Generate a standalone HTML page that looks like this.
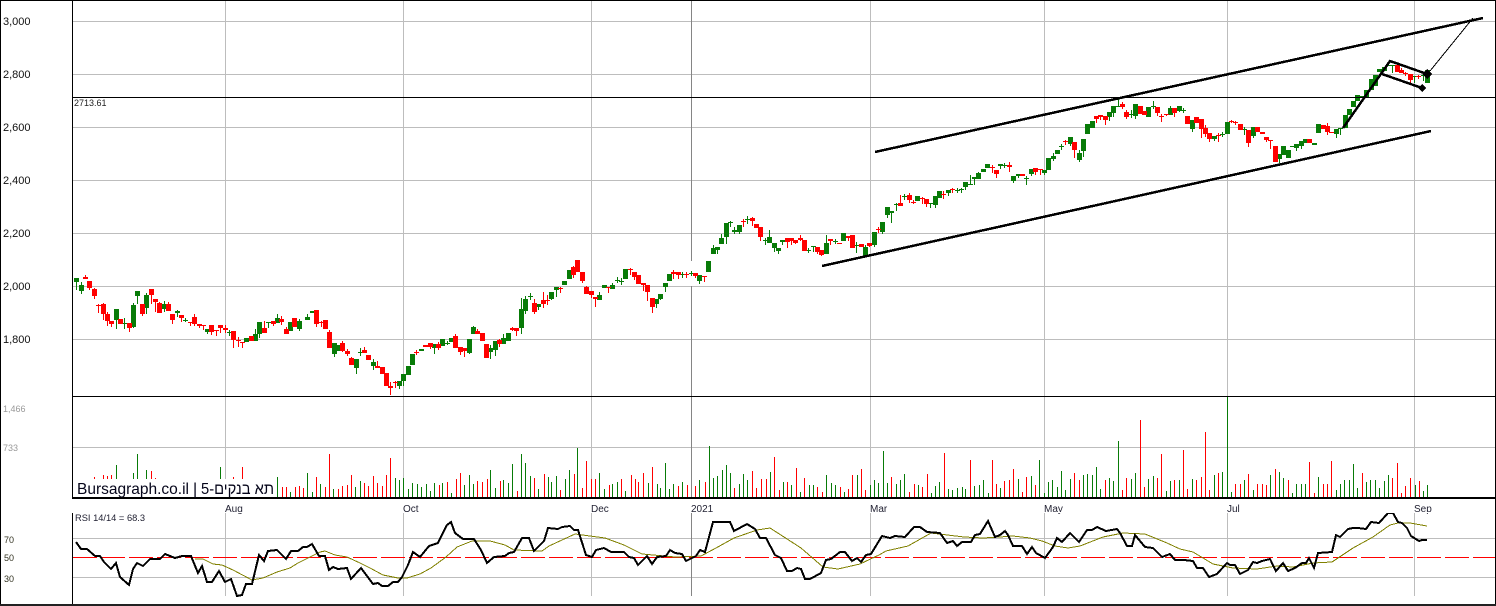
<!DOCTYPE html>
<html><head><meta charset="utf-8"><title>Bursagraph</title>
<style>html,body{margin:0;padding:0;background:#fff;overflow:hidden}svg{display:block}text{font-family:"Liberation Sans",Arial,sans-serif}</style></head>
<body>
<svg xmlns="http://www.w3.org/2000/svg" width="1496" height="606" viewBox="0 0 1496 606" shape-rendering="crispEdges">
<rect width="1496" height="606" fill="#fff"/>
<!-- grid -->
<path fill="none" stroke="#bdbdbd" d="M73 21.5H1495M73 74.5H1495M73 127.5H1495M73 180.5H1495M73 233.5H1495M73 286.5H1495M73 339.5H1495M73 447.5H1495M73 538.5H1495M73 577.5H1495"/>
<path fill="none" stroke="#bdbdbd" d="M225.5 1V497M403.5 1V497M591.5 1V497M870.5 1V497M1044.5 1V497M1227.5 1V497M1414.5 1V497M225.5 513V596M403.5 513V596M591.5 513V596M870.5 513V596M1044.5 513V596M1227.5 513V596M1414.5 513V596"/>
<path fill="none" stroke="#858585" d="M691.5 1V261M691.5 286V497M691.5 513V596"/>
<!-- candles -->
<g transform="translate(.5 0)" fill="none">
<path stroke="#087b08" d="M76 278V290M81 282V294M116 309V329M124 318V329M133 303V328M137 291V304M146 293V314M164 301V312M177 310V317M185 318V322M207 329V334M229 330V336M255 329V341M259 322V338M268 322V328M277 314V323M299 319V331M307 314V320M334 343V357M356 359V374M360 348V356M373 359V370M399 381V389M403 374V386M434 344V354M447 341V345M469 339V354M473 326V334M490 345V359M495 341V356M503 334V344M521 298V334M525 296V314M530 293V300M538 304V310M551 292V300M556 287V297M599 292V300M612 283V289M617 277V283M621 278V285M656 299V308M660 294V300M665 283V292M682 272V278M691 271V276M699 275V284M713 245V254M717 247V254M721 234V244M726 223V244M730 221V227M734 227V234M739 225V234M747 216V224M765 238V245M769 230V243M774 243V252M778 248V254M782 240V245M808 248V253M813 246V252M826 235V254M835 239V244M856 242V253M865 245V257M874 232V247M882 222V234M887 207V218M891 211V223M896 203V211M904 194V200M917 196V201M930 203V208M935 196V208M939 191V198M948 190V196M957 188V193M961 188V193M965 182V190M970 175V185M974 177V185M978 172V179M1000 164V169M1004 163V168M1013 176V183M1018 174V178M1026 176V185M1031 169V176M1044 170V175M1053 153V161M1061 144V150M1070 137V146M1079 150V162M1083 139V157M1109 112V121M1113 106V117M1118 99V106M1131 110V118M1135 104V119M1153 101V109M1170 106V115M1179 106V112M1183 108V113M1192 120V132M1214 136V141M1222 132V137M1244 127V135M1253 127V138M1279 154V163M1296 144V151M1301 141V149M1336 129V138M1340 128V135M1392 65V73M1414 76V83M1423 75V81"/>
<path stroke="#087b08" stroke-width="5" d="M76 278V282M81 285V291M116 309V320M124 323V324M133 305V327M137 291V296M146 295V308M164 304V309M177 311V313M185 320V321M207 329V332M229 332V333M246 338V342M255 334V341M259 322V334M268 322V323M277 318V323M290 322V331M299 321V329M307 317V320M312 311V313M334 343V354M338 345V351M356 359V368M360 352V353M373 362V366M399 381V386M403 374V381M408 366V375M412 354V365M421 349V351M434 344V348M442 339V346M447 343V344M451 338V342M469 339V353M473 327V334M490 348V352M495 341V350M503 338V344M508 333V341M521 309V328M525 299V311M530 296V297M538 304V307M551 292V299M556 287V290M564 281V285M569 270V279M599 295V300M604 285V288M612 285V289M617 280V281M621 281V282M625 269V279M656 299V304M660 294V299M665 283V287M669 274V281M682 274V275M691 273V274M699 275V281M708 261V272M713 248V254M717 247V250M721 238V244M726 223V237M730 222V223M734 230V232M739 225V232M747 219V220M765 240V241M769 237V243M774 243V248M778 248V251M782 240V242M808 250V251M813 246V247M826 243V254M835 241V242M843 233V241M856 245V246M865 247V256M874 232V245M882 222V232M887 207V215M891 211V213M896 204V205M904 196V197M917 196V201M930 203V204M935 196V205M939 191V198M948 190V193M957 190V191M961 189V190M965 182V187M970 184V185M974 177V179M978 173V179M983 169V172M987 164V168M1000 164V166M1004 165V166M1013 176V181M1018 174V176M1026 178V179M1031 169V174M1044 170V173M1048 158V170M1053 156V159M1057 150V154M1061 146V147M1070 137V144M1079 153V160M1083 139V151M1087 124V134M1092 121V128M1109 112V117M1113 106V113M1118 106V107M1131 114V115M1135 104V116M1148 107V117M1153 106V107M1170 108V115M1179 106V111M1183 110V111M1192 120V129M1214 136V139M1222 134V135M1227 122V134M1244 129V130M1253 127V136M1279 154V159M1283 146V155M1288 150V158M1292 146V147M1296 144V148M1301 141V146M1305 139V143M1314 143V145M1318 124V133M1336 129V134M1340 128V129M1345 115V128M1349 109V115M1353 101V107M1357 95V101M1362 96V97M1366 90V97M1371 79V90M1375 75V86M1379 69V72M1384 67V71M1388 65V66M1392 65V66M1414 76V77M1423 75V76M1427 70V83"/>
<path stroke="#f00" d="M85 275V279M89 281V290M94 288V299M98 304V313M103 303V320M107 312V326M111 321V327M129 323V332M142 304V316M151 289V304M155 299V312M159 302V313M168 302V311M172 314V324M181 315V322M190 322V326M194 314V326M199 324V328M203 325V330M211 325V335M216 330V336M220 325V333M225 325V333M233 331V348M238 337V347M242 342V348M264 321V333M273 321V326M281 316V325M286 327V334M316 310V327M321 321V327M329 330V348M342 341V352M347 349V356M351 357V365M364 347V353M377 361V368M390 382V395M395 381V388M416 350V355M430 343V349M438 342V350M455 334V348M460 347V355M464 348V357M477 329V334M499 339V347M512 327V331M516 328V336M534 299V314M543 292V308M547 295V305M560 287V293M573 266V278M582 272V283M586 286V294M591 291V298M595 297V307M608 287V293M630 268V275M634 272V280M643 283V291M647 285V301M652 298V313M673 270V279M678 272V279M686 272V278M695 273V278M704 276V282M743 219V227M752 217V226M760 227V241M787 238V248M791 238V245M795 240V244M800 235V241M817 247V254M821 250V256M830 239V245M848 236V241M869 243V247M878 227V233M900 195V206M909 193V203M913 200V204M922 197V204M926 199V207M943 191V199M952 188V193M992 165V173M996 170V178M1009 162V172M1035 168V175M1040 169V175M1065 140V145M1074 142V158M1096 116V123M1100 115V120M1105 116V125M1122 102V109M1126 110V119M1157 107V116M1161 114V122M1166 114V116M1174 108V117M1201 119V138M1205 125V137M1209 133V142M1218 133V142M1231 120V123M1235 121V125M1248 130V147M1266 137V142M1270 140V149M1327 123V135M1401 68V73M1405 72V76M1410 74V83M1418 75V79"/>
<path stroke="#f00" stroke-width="5" d="M85 277V279M89 281V288M94 289V296M98 305V306M103 304V314M107 314V321M111 321V324M120 319V324M129 323V328M142 304V314M151 289V295M155 299V302M159 303V313M168 304V311M172 314V320M181 315V318M190 322V323M194 317V324M199 324V326M203 325V326M211 325V332M216 330V331M220 325V328M225 328V330M233 331V340M238 340V341M242 342V343M251 336V341M264 328V333M273 321V324M281 319V322M286 329V334M294 318V327M316 310V324M321 322V323M325 320V329M329 332V348M342 343V351M347 351V354M351 358V365M364 350V353M368 355V360M377 366V368M382 367V374M386 373V386M390 386V388M395 382V383M416 352V353M425 345V347M430 343V347M438 344V348M455 336V348M460 347V352M464 348V351M477 331V334M482 333V341M486 344V358M499 340V344M512 328V330M516 328V331M534 303V312M543 300V304M547 300V301M560 288V289M573 267V275M577 260V272M582 272V281M586 287V294M591 291V295M595 297V299M608 287V288M630 269V270M634 272V277M638 275V284M643 283V285M647 285V292M652 298V307M673 272V274M678 272V275M686 274V275M695 273V276M704 276V277M743 221V222M752 218V221M756 224V228M760 227V237M787 238V242M791 238V241M795 240V243M800 238V240M804 240V251M817 247V252M821 250V255M830 239V241M839 243V244M848 236V238M852 235V248M861 244V247M869 243V246M878 229V230M900 203V206M909 195V200M913 202V203M922 198V199M926 199V204M943 194V195M952 189V190M992 167V168M996 170V174M1009 165V167M1022 174V176M1035 168V172M1040 169V170M1065 141V142M1074 142V150M1096 116V119M1100 115V117M1105 116V120M1122 104V107M1126 112V117M1140 106V114M1144 111V115M1157 107V113M1161 116V117M1166 114V115M1174 108V113M1187 116V124M1196 117V123M1201 119V129M1205 128V134M1209 133V139M1218 135V136M1231 121V122M1235 122V123M1240 124V130M1248 130V143M1257 127V132M1262 132V134M1266 137V140M1270 140V141M1275 146V162M1309 139V143M1323 125V129M1327 126V132M1331 132V133M1397 65V72M1401 70V73M1405 73V74M1410 74V80M1418 76V77"/>
</g>
<!-- volume -->
<g transform="translate(.5 0)" fill="none">
<path stroke="#087b08" d="M116 465V479M133 473V479M137 454V479M146 470V479M220 467V479M277 477V497M290 492V497M307 473V497M312 492V497M320 484V497M333 489V497M355 487V497M360 481V497M395 478V497M399 480V497M403 478V497M408 489V497M412 483V497M417 484V497M421 487V497M426 484V497M430 491V497M434 483V497M442 483V497M451 493V497M464 485V497M469 475V497M473 484V497M490 470V497M495 488V497M503 480V497M508 483V497M512 464V497M521 454V497M525 463V497M530 476V497M538 489V497M548 477V497M551 482V497M556 476V497M565 479V497M569 470V497M577 448V497M599 473V497M604 489V497M612 484V497M617 482V497M625 491V497M648 483V497M657 484V497M660 488V497M665 463V497M669 489V497M673 484V497M682 482V497M699 480V497M709 446V497M713 478V497M717 476V497M722 470V497M726 465V497M730 473V497M739 484V497M743 474V497M747 480V497M770 472V497M783 482V497M791 485V497M800 492V497M809 485V497M813 485V497M826 475V497M831 483V497M835 485V497M844 492V497M857 475V497M870 485V497M874 480V497M878 483V497M883 451V497M887 483V497M896 484V497M900 480V497M904 474V497M918 485V497M931 493V497M935 486V497M939 482V497M948 489V497M952 490V497M957 488V497M962 487V497M965 489V497M974 486V497M979 485V497M983 480V497M988 493V497M1000 488V497M1018 479V497M1031 476V497M1039 460V497M1044 493V497M1048 482V497M1052 480V497M1057 487V497M1061 471V497M1065 490V497M1070 479V497M1083 475V497M1087 474V497M1092 475V497M1096 467V497M1100 489V497M1109 478V497M1113 481V497M1118 441V497M1131 479V497M1135 473V497M1148 479V497M1153 476V497M1166 491V497M1170 481V497M1179 480V497M1192 479V497M1214 475V497M1222 472V497M1227 397V497M1231 492V497M1244 480V497M1253 490V497M1270 475V497M1279 472V497M1283 478V497M1292 493V497M1296 484V497M1301 484V497M1305 484V497M1318 477V497M1336 490V497M1340 484V497M1344 480V497M1349 480V497M1353 464V497M1357 488V497M1366 482V497M1370 480V497M1375 480V497M1379 488V497M1384 481V497M1388 475V497M1415 485V497M1423 491V497M1427 485V497"/>
<path stroke="#f00" d="M94 477V479M103 475V479M107 476V479M111 475V479M151 471V479M155 478V479M233 477V479M242 467V479M282 487V497M286 487V497M295 487V497M299 486V497M303 488V497M316 477V497M325 487V497M329 454V497M338 489V497M342 486V497M347 485V497M351 475V497M364 483V497M368 486V497M373 476V497M377 483V497M382 486V497M386 475V497M390 458V497M439 485V497M447 482V497M456 479V497M460 473V497M477 481V497M482 482V497M487 479V497M500 481V497M517 491V497M534 478V497M544 474V497M560 490V497M574 474V497M582 488V497M586 461V497M591 479V497M595 479V497M609 485V497M621 479V497M631 475V497M635 479V497M638 482V497M643 473V497M652 467V497M678 486V497M687 485V497M695 486V497M705 482V497M734 488V497M752 471V497M756 488V497M761 479V497M766 479V497M774 457V497M779 490V497M787 482V497M796 468V497M804 478V497M817 487V497M822 492V497M840 487V497M848 489V497M852 475V497M861 469V497M865 490V497M891 477V497M909 492V497M914 484V497M922 487V497M927 474V497M944 453V497M970 460V497M992 460V497M996 484V497M1004 481V497M1009 480V497M1013 469V497M1022 492V497M1026 477V497M1035 485V497M1074 473V497M1079 480V497M1105 480V497M1122 490V497M1126 478V497M1140 420V497M1144 487V497M1157 478V497M1161 454V497M1174 480V497M1183 450V497M1187 489V497M1196 480V497M1201 477V497M1205 432V497M1209 490V497M1218 473V497M1235 484V497M1240 484V497M1248 474V497M1257 484V497M1262 484V497M1266 485V497M1275 469V497M1288 480V497M1309 462V497M1314 493V497M1323 484V497M1327 484V497M1331 461V497M1362 473V497M1392 478V497M1397 463V497M1401 493V497M1405 486V497M1410 478V497M1419 481V497"/>
</g>
<!-- RSI -->
<path fill="none" stroke="#f00" stroke-dasharray="24 4" d="M73 557.5H1495"/>
<polyline fill="none" stroke="#808000" points="195,559 203,559 213,564 222,565 233,570 252,580 263,578 277,572 290,568 298,563 310,557 320,552 325,551 335,555 347,557 360,563 370,568 383,575 398,578 407,578 420,574 431,568 446,557 457,547 472,541 490,541 505,545 514,550 542,551 549,546 575,534 605,538 624,545 642,554 675,557 701,556 716,548 734,538 757,530 770,528 784,537 801,548 823,567 838,569 860,564 879,555 886,551 908,546 931,533 964,537 983,538 1000,537 1013,536 1030,538 1042,541 1055,546 1068,548 1080,546 1103,537 1123,533 1145,534 1167,543 1180,549 1193,552 1213,564 1233,568 1257,569 1277,566 1293,567 1313,563 1332,562 1353,548 1373,537 1390,525 1398,523 1410,523 1427,526"/>
<polyline fill="none" stroke="#000" stroke-width="2" points="76,542 81,549 87,549 95,556 100,556 104,562 111,569 116,563 120,577 129,585 133,569 137,563 143,566 150,559 160,559 165,554 175,558 182,556 191,556 198,573 202,566 207,582 212,582 219,571 225,582 231,579 237,596 242,595 246,584 252,584 259,555 264,561 268,551 277,550 286,559 291,551 298,551 303,547 307,547 312,544 319,556 325,556 329,570 333,567 338,569 347,568 351,579 361,568 373,584 378,583 382,586 388,586 393,582 398,582 402,577 408,565 413,552 420,557 429,546 438,543 447,525 451,522 455,533 463,539 474,539 481,550 487,563 494,557 505,556 509,553 514,552 522,538 529,538 534,551 544,541 548,528 558,529 562,527 570,526 574,530 578,530 586,555 592,557 596,550 604,548 611,552 624,552 629,557 634,558 638,565 647,556 652,564 657,557 666,556 670,550 675,553 682,554 686,561 696,556 700,550 705,552 713,522 730,522 734,531 747,524 755,529 760,538 766,538 775,555 781,558 787,571 792,571 797,568 801,569 805,579 810,579 821,573 826,560 831,559 840,552 845,552 852,561 857,558 861,562 866,555 871,554 882,536 890,538 895,536 905,537 914,527 920,527 927,532 940,533 947,543 953,541 957,546 962,542 971,542 975,535 980,534 988,521 995,537 1000,535 1005,531 1008,535 1013,546 1022,546 1027,554 1032,547 1036,553 1045,558 1053,547 1057,538 1062,542 1070,533 1079,542 1087,530 1092,530 1097,527 1106,531 1117,529 1120,533 1127,546 1132,546 1135,535 1145,547 1153,548 1162,557 1170,554 1175,560 1184,560 1193,561 1197,568 1203,568 1209,577 1217,574 1227,563 1230,565 1235,565 1240,574 1248,570 1253,562 1257,563 1262,561 1270,559 1276,571 1283,563 1288,571 1295,568 1302,563 1306,563 1309,558 1314,568 1318,553 1332,552 1336,535 1340,537 1348,529 1353,528 1358,528 1366,529 1371,522 1379,523 1388,513 1393,513 1398,522 1402,523 1407,528 1411,536 1419,541 1422,540 1427,540"/>
<!-- drawn lines -->
<path fill="none" stroke="#000" stroke-width="2.5" d="M875 152L1483 18M822 266L1431 131M1343 128L1390 61L1427 74M1382 74L1422 88"/>
<path fill="none" stroke="#000" d="M1430 71L1473 18"/>
<polygon points="1427,69 1432,74 1427,79 1422,74" fill="#000"/>
<polygon points="1422,84 1426,88 1422,92 1418,88" fill="#000"/>
<!-- frame -->
<g fill="#000">
<rect x="0" y="0" width="1496" height="1"/>
<rect x="0" y="0" width="1" height="606"/>
<rect x="1495" y="0" width="1" height="606"/>
<rect x="0" y="604" width="1496" height="2" fill="#222"/>
<rect x="72" y="0" width="1" height="497"/>
<rect x="72" y="513" width="1" height="91"/>
<rect x="72" y="97" width="1423" height="1"/>
<rect x="72" y="396" width="1423" height="1"/>
<rect x="72" y="497" width="1423" height="2"/>
</g>
<!-- labels -->
<rect x="73" y="479" width="204" height="18" fill="#fff"/>
<g font-size="16" fill="#05051a">
<text x="77" y="494" textLength="112" lengthAdjust="spacingAndGlyphs">Bursagraph.co.il</text>
<text x="193" y="494">|</text>
<text x="201" y="494" textLength="73" lengthAdjust="spacingAndGlyphs">תא בנקים-5</text>
</g>
<g font-size="11" fill="#111">
<text x="3" y="25">3,000</text><text x="3" y="78">2,800</text><text x="3" y="131">2,600</text><text x="3" y="184">2,400</text><text x="3" y="237">2,200</text><text x="3" y="290">2,000</text><text x="3" y="343">1,800</text>
</g>
<text x="74" y="106" font-size="9" fill="#222">2713.61</text>
<text x="3" y="412" font-size="9" fill="#999">1,466</text>
<text x="3" y="451" font-size="9" fill="#999">733</text>
<g font-size="10" fill="#223">
<text x="225" y="512">Aug</text><text x="403" y="512">Oct</text><text x="591" y="512">Dec</text><text x="691" y="512">2021</text><text x="870" y="512">Mar</text><text x="1044" y="512">May</text><text x="1227" y="512">Jul</text><text x="1414" y="512">Sep</text>
</g>
<rect x="73" y="512" width="1422" height="1" fill="#fff"/>
<text x="75" y="521" font-size="9.3" fill="#223">RSI 14/14 = 68.3</text>
<g font-size="9" fill="#332">
<text x="4" y="543">70</text><text x="4" y="561">50</text><text x="4" y="582">30</text>
</g>
</svg>
</body></html>
